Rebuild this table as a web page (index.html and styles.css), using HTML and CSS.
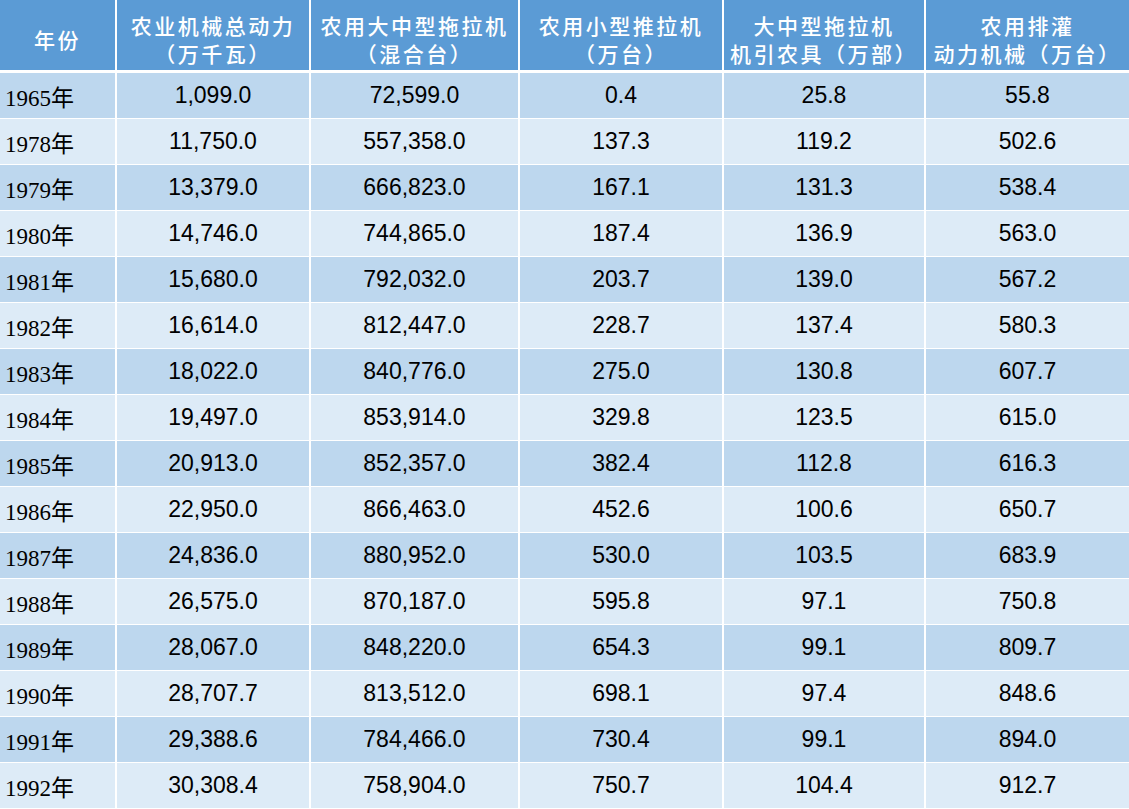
FILE: index.html
```html
<!DOCTYPE html>
<html lang="zh">
<head>
<meta charset="utf-8">
<title>农业机械</title>
<link rel="stylesheet" href="styles.css">
</head>
<body>
<div class="table">
  <div class="row head">
    <div class="cell"><span>年份</span></div>
    <div class="cell"><span>农业机械总动力<br>（万千瓦）</span></div>
    <div class="cell"><span>农用大中型拖拉机<br>（混合台）</span></div>
    <div class="cell"><span>农用小型推拉机<br>（万台）</span></div>
    <div class="cell"><span>大中型拖拉机<br>机引农具（万部）</span></div>
    <div class="cell"><span>农用排灌<br>动力机械（万台）</span></div>
  </div>
  <div class="row a"><div class="cell year">1965年</div><div class="cell">1,099.0</div><div class="cell">72,599.0</div><div class="cell">0.4</div><div class="cell">25.8</div><div class="cell">55.8</div></div>
  <div class="row b"><div class="cell year">1978年</div><div class="cell">11,750.0</div><div class="cell">557,358.0</div><div class="cell">137.3</div><div class="cell">119.2</div><div class="cell">502.6</div></div>
  <div class="row a"><div class="cell year">1979年</div><div class="cell">13,379.0</div><div class="cell">666,823.0</div><div class="cell">167.1</div><div class="cell">131.3</div><div class="cell">538.4</div></div>
  <div class="row b"><div class="cell year">1980年</div><div class="cell">14,746.0</div><div class="cell">744,865.0</div><div class="cell">187.4</div><div class="cell">136.9</div><div class="cell">563.0</div></div>
  <div class="row a"><div class="cell year">1981年</div><div class="cell">15,680.0</div><div class="cell">792,032.0</div><div class="cell">203.7</div><div class="cell">139.0</div><div class="cell">567.2</div></div>
  <div class="row b"><div class="cell year">1982年</div><div class="cell">16,614.0</div><div class="cell">812,447.0</div><div class="cell">228.7</div><div class="cell">137.4</div><div class="cell">580.3</div></div>
  <div class="row a"><div class="cell year">1983年</div><div class="cell">18,022.0</div><div class="cell">840,776.0</div><div class="cell">275.0</div><div class="cell">130.8</div><div class="cell">607.7</div></div>
  <div class="row b"><div class="cell year">1984年</div><div class="cell">19,497.0</div><div class="cell">853,914.0</div><div class="cell">329.8</div><div class="cell">123.5</div><div class="cell">615.0</div></div>
  <div class="row a"><div class="cell year">1985年</div><div class="cell">20,913.0</div><div class="cell">852,357.0</div><div class="cell">382.4</div><div class="cell">112.8</div><div class="cell">616.3</div></div>
  <div class="row b"><div class="cell year">1986年</div><div class="cell">22,950.0</div><div class="cell">866,463.0</div><div class="cell">452.6</div><div class="cell">100.6</div><div class="cell">650.7</div></div>
  <div class="row a"><div class="cell year">1987年</div><div class="cell">24,836.0</div><div class="cell">880,952.0</div><div class="cell">530.0</div><div class="cell">103.5</div><div class="cell">683.9</div></div>
  <div class="row b"><div class="cell year">1988年</div><div class="cell">26,575.0</div><div class="cell">870,187.0</div><div class="cell">595.8</div><div class="cell">97.1</div><div class="cell">750.8</div></div>
  <div class="row a"><div class="cell year">1989年</div><div class="cell">28,067.0</div><div class="cell">848,220.0</div><div class="cell">654.3</div><div class="cell">99.1</div><div class="cell">809.7</div></div>
  <div class="row b"><div class="cell year">1990年</div><div class="cell">28,707.7</div><div class="cell">813,512.0</div><div class="cell">698.1</div><div class="cell">97.4</div><div class="cell">848.6</div></div>
  <div class="row a"><div class="cell year">1991年</div><div class="cell">29,388.6</div><div class="cell">784,466.0</div><div class="cell">730.4</div><div class="cell">99.1</div><div class="cell">894.0</div></div>
  <div class="row b"><div class="cell year">1992年</div><div class="cell">30,308.4</div><div class="cell">758,904.0</div><div class="cell">750.7</div><div class="cell">104.4</div><div class="cell">912.7</div></div>
</div>
</body>
</html>
```

FILE: styles.css
```css
html, body {
  margin: 0;
  padding: 0;
  background: #ffffff;
}

.table {
  display: grid;
  width: 1129px;
  grid-template-columns: 115px 192px 207px 202px 200px 203px;
  grid-template-rows: 72px repeat(16, 45px);
  column-gap: 2px;
  row-gap: 1px;
  background: #ffffff;
}

.row {
  display: contents;
}

.cell {
  display: flex;
  align-items: center;
  justify-content: center;
  font-family: "Liberation Sans", Arial, sans-serif;
  font-size: 23px;
  color: #000000;
}

.row.a .cell {
  background: #bdd7ee;
}

.row.b .cell {
  background: #ddebf7;
}

.cell.year {
  justify-content: flex-start;
  padding-left: 5px;
  font-family: "Liberation Serif", "Noto Sans CJK SC", serif;
  font-size: 23px;
}

.head .cell {
  align-self: start;
  height: 70px;
  box-sizing: border-box;
  padding-top: 7px;
  background: #5b9bd5;
  color: #ffffff;
  font-family: "Noto Sans CJK SC", sans-serif;
  font-size: 21px;
  font-weight: 500;
  letter-spacing: 2.5px;
  line-height: 28px;
  text-align: center;
}

.head .cell span {
  display: block;
}
```
